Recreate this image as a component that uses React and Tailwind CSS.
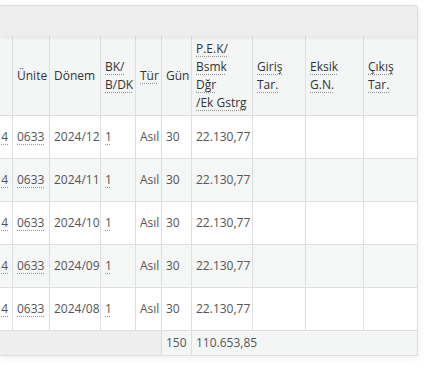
const cols = 'grid-cols-[12px_36px_50px_34px_25px_29px_60px_52px_57px_53px]';

const rows = [
  { donem: '2024/12' },
  { donem: '2024/11' },
  { donem: '2024/10' },
  { donem: '2024/09' },
  { donem: '2024/08' },
];

const dotted = 'underline decoration-dotted decoration-[#9a9a9a] underline-offset-[3px]';

function Th({ children, link }) {
  return (
    <div className="bg-[#f4f6f6] flex items-center px-[4px] text-[#333]">
      {link ? <span className={dotted}>{children}</span> : children}
    </div>
  );
}

function Row({ donem, striped }) {
  const bg = striped ? 'bg-[#f5f6f6]' : 'bg-white';
  const cell = `${bg} flex items-center px-[4px] h-[42px] whitespace-nowrap`;
  return (
    <>
      <div className={`${bg} flex items-center justify-end pr-[4px] h-[42px]`}>
        <span className={dotted}>4</span>
      </div>
      <div className={cell}><span className={dotted}>0633</span></div>
      <div className={cell}>{donem}</div>
      <div className={cell}><span className={dotted}>1</span></div>
      <div className={cell}>Asıl</div>
      <div className={cell}>30</div>
      <div className={cell}>22.130,77</div>
      <div className={cell} />
      <div className={cell} />
      <div className={cell} />
    </>
  );
}

export default function App() {
  return (
    <div className="w-[442px] h-[384px] bg-white pt-[5px] text-[12px] leading-[18px] text-[#555]" style={{ fontFamily: '"Open Sans", "DejaVu Sans", sans-serif' }}>
      <div className="w-[418px] shadow-[0_2px_6px_rgba(0,0,0,0.07)] rounded-tr-[4px]">
        <div className="relative z-10 h-[31px] bg-[#ededed] border-t border-r border-[#dedede] rounded-tr-[4px] shadow-[0_2px_4px_rgba(0,0,0,0.07)]" />
        <div className={`grid ${cols} gap-px bg-[#dedede] pr-px pb-px`}>
          <div className="bg-[#f4f6f6] h-[79px]" />
          <Th>Ünite</Th>
          <Th>Dönem</Th>
          <Th link>BK/<br />B/DK</Th>
          <Th link>Tür</Th>
          <Th>Gün</Th>
          <Th link>P.E.K/<br />Bsmk<br />Dğr<br />/Ek Gstrg</Th>
          <Th link>Giriş<br />Tar.</Th>
          <Th link>Eksik<br />G.N.</Th>
          <Th link>Çıkış<br />Tar.</Th>

          {rows.map((r, i) => (
            <Row key={r.donem} donem={r.donem} striped={i % 2 === 1} />
          ))}

          <div className="col-span-5 bg-[#eeeeee] h-[24px]" />
          <div className="bg-[#f4f6f6] flex items-center px-[4px]">150</div>
          <div className="col-span-4 bg-[#f4f6f6] flex items-center px-[4px]">110.653,85</div>
        </div>
      </div>
    </div>
  );
}
